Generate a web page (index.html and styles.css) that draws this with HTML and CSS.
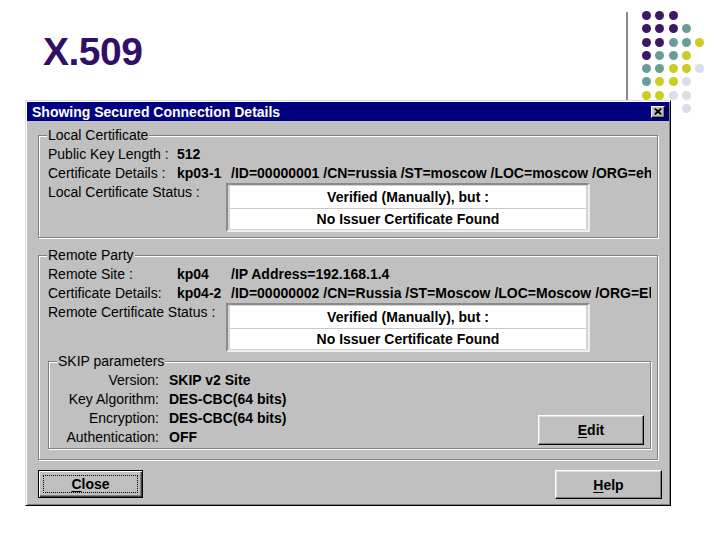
FILE: index.html
```html
<!DOCTYPE html>
<html>
<head>
<meta charset="utf-8">
<link rel="stylesheet" href="styles.css">
</head>
<body>
<div class="slide">
  <div class="deco" aria-hidden="true">
    <div class="vline"></div>
    <div class="dots">
      <span class="dot p"></span><span class="dot p"></span><span class="dot p"></span><span class="dot"></span><span class="dot"></span>
      <span class="dot p"></span><span class="dot p"></span><span class="dot p"></span><span class="dot t"></span><span class="dot"></span>
      <span class="dot p"></span><span class="dot p"></span><span class="dot t"></span><span class="dot t"></span><span class="dot y"></span>
      <span class="dot p"></span><span class="dot t"></span><span class="dot t"></span><span class="dot y"></span><span class="dot"></span>
      <span class="dot t"></span><span class="dot t"></span><span class="dot y"></span><span class="dot y"></span><span class="dot l"></span>
      <span class="dot t"></span><span class="dot y"></span><span class="dot y"></span><span class="dot l"></span><span class="dot"></span>
      <span class="dot y"></span><span class="dot y"></span><span class="dot l"></span><span class="dot l"></span><span class="dot"></span>
      <span class="dot"></span><span class="dot"></span><span class="dot"></span><span class="dot l"></span><span class="dot"></span>
    </div>
  </div>

  <h1 class="title">X.509</h1>

  <div class="dialog">
    <div class="titlebar">
      <span>Showing Secured Connection Details</span>
      <span class="xbtn"><svg width="8" height="7" viewBox="0 0 8 7"><path d="M0.8 0.6 L7.2 6.4 M7.2 0.6 L0.8 6.4" stroke="#000" stroke-width="1.9" fill="none"/></svg></span>
    </div>

    <div class="dialog-body">
      <fieldset class="group local">
        <legend>Local Certificate</legend>
        <div class="row"><span class="lbl">Public Key Length :</span><b class="val">512</b></div>
        <div class="row"><span class="lbl">Certificate Details :</span><b class="tok">kp03-1</b><b class="val">/ID=00000001 /CN=russia /ST=moscow /LOC=moscow /ORG=eh</b></div>
        <div class="row status-row">
          <span class="lbl wide">Local Certificate Status :</span>
          <div class="status">
            <div class="status-line">Verified (Manually), but :</div>
            <div class="status-line second">No Issuer Certificate Found</div>
          </div>
        </div>
      </fieldset>

      <fieldset class="group remote">
        <legend>Remote Party</legend>
        <div class="row"><span class="lbl">Remote Site :</span><b class="tok">kp04</b><b class="val">/IP Address=192.168.1.4</b></div>
        <div class="row"><span class="lbl">Certificate Details:</span><b class="tok">kp04-2</b><b class="val">/ID=00000002 /CN=Russia /ST=Moscow /LOC=Moscow /ORG=Eh</b></div>
        <div class="row status-row">
          <span class="lbl wide">Remote Certificate Status :</span>
          <div class="status">
            <div class="status-line">Verified (Manually), but :</div>
            <div class="status-line second">No Issuer Certificate Found</div>
          </div>
        </div>

        <fieldset class="group skip">
          <legend>SKIP parameters</legend>
          <div class="skip-content">
            <dl class="params">
              <dt>Version:</dt><dd>SKIP v2 Site</dd>
              <dt>Key Algorithm:</dt><dd>DES-CBC(64 bits)</dd>
              <dt>Encryption:</dt><dd>DES-CBC(64 bits)</dd>
              <dt>Authentication:</dt><dd>OFF</dd>
            </dl>
            <button class="btn edit"><span><u>E</u>dit</span></button>
          </div>
        </fieldset>
      </fieldset>
    </div>

    <div class="dialog-footer">
      <button class="btn btn-default close"><span class="focus"><u>C</u>lose</span></button>
      <button class="btn help"><span><u>H</u>elp</span></button>
    </div>
  </div>
</div>
</body>
</html>
```

FILE: styles.css
```css
* { box-sizing: border-box; }

body {
  margin: 0;
  background: #fff;
  font-family: "Liberation Sans", Arial, sans-serif;
  color: #000;
}

.slide {
  position: relative;
  width: 720px;
  height: 540px;
  overflow: hidden;
  padding-top: 32px;
}

/* decoration top right */
.vline {
  position: absolute;
  left: 626px;
  top: 12px;
  width: 2px;
  height: 95px;
  background: #8a8a8a;
}
.dots {
  position: absolute;
  left: 642px;
  top: 11px;
  display: grid;
  grid-template-columns: repeat(5, 9px);
  grid-auto-rows: 9px;
  gap: 4.3px;
}
.dot { width: 9px; height: 9px; border-radius: 50%; }
.dot.p { background: #3a1863; }
.dot.t { background: #6c9c9a; }
.dot.y { background: #cccc22; }
.dot.l { background: #dcdcea; }

.title {
  margin: 0 0 0 43px;
  font-size: 39px;
  line-height: 39px;
  font-weight: bold;
  color: #330e66;
  letter-spacing: -0.5px;
}

/* dialog */
.dialog {
  position: relative;
  z-index: 1;
  margin: 29px 0 0 25px;
  width: 646px;
  background: #c0c0c0;
  border: 1px solid;
  border-color: #dfdfdf #000 #000 #dfdfdf;
  box-shadow: inset 1px 1px 0 #fff, inset -1px -1px 0 #808080;
  padding: 1px;
  font-size: 14px;
}

.titlebar {
  height: 19px;
  background: #000080;
  color: #fff;
  font-weight: bold;
  font-size: 14px;
  display: flex;
  align-items: center;
  justify-content: space-between;
  padding: 0 4px 0 5px;
}
.xbtn {
  width: 14px;
  height: 12px;
  background: #c0c0c0;
  border: 1px solid;
  border-color: #fff #000 #000 #fff;
  box-shadow: inset -1px -1px 0 #808080;
  display: flex;
  align-items: center;
  justify-content: center;
}
.xbtn svg { display: block; }

.dialog-body {
  padding: 7px 11px 0 11px;
}

.group {
  margin: 0;
  min-width: 0;
  border: 1px solid #808080;
  box-shadow: inset 1px 1px 0 #fff, 1px 1px 0 #fff;
  padding: 2px 6px 6px 9px;
}
.group legend {
  padding: 0 1px;
  margin-left: -1px;
  font-size: 14px;
  line-height: 15px;
  background: #c0c0c0;
}
.local {
  padding-bottom: 5px;
}
.remote {
  margin-top: 10px;
  padding-bottom: 10px;
  padding-right: 6px;
}

.row {
  display: flex;
  height: 19px;
  line-height: 19px;
  white-space: nowrap;
  overflow: hidden;
}
.lbl { flex: none; width: 129px; }
.lbl.wide { width: 178px; }
.tok { flex: none; width: 54px; font-weight: bold; }
.val { font-weight: bold; }
.status-row { height: auto; }

.status {
  flex: none;
  width: 364px;
  height: 49px;
  border: 2px solid;
  border-color: #8a8a8a #eeeeee #eeeeee #8a8a8a;
  padding: 1px 2px;
  background: #d4d4d4;
}
.status-line {
  height: 22px;
  line-height: 22px;
  background: #fff;
  text-align: center;
  font-weight: bold;
}
.status-line.second {
  height: 21px;
  line-height: 20px;
  border-top: 1px solid #c8c8c8;
}

.skip {
  margin-top: 2px;
  padding: 2px 6px 1px 9px;
}
.skip-content {
  display: flex;
}
.params {
  margin: 0;
  display: grid;
  grid-template-columns: 101px auto;
  column-gap: 10px;
  line-height: 19px;
}
.params dt { text-align: right; }
.params dd { margin: 0; font-weight: bold; }

/* buttons */
.btn {
  font-family: "Liberation Sans", Arial, sans-serif;
  font-size: 14px;
  font-weight: bold;
  color: #000;
  background: #c0c0c0;
  border: 1px solid;
  border-color: #fff #000 #000 #fff;
  box-shadow: inset -1px -1px 0 #808080, inset 1px 1px 0 #dfdfdf;
  padding: 0;
  display: flex;
  align-items: center;
  justify-content: center;
  cursor: default;
}
.btn u { text-underline-offset: 2px; }
.edit {
  margin-left: auto;
  align-self: flex-end;
  margin-bottom: 2px;
  width: 106px;
  height: 30px;
}

.dialog-footer {
  display: flex;
  justify-content: space-between;
  align-items: flex-start;
  padding: 10px 7px 5px 11px;
}
.close {
  width: 105px;
  height: 28px;
}
.btn-default {
  border: 1px solid #000;
  box-shadow: inset 1px 1px 0 #fff, inset -1px -1px 0 #404040, inset -2px -2px 0 #808080;
  padding: 4px;
  align-items: stretch;
}
.btn-default .focus {
  flex: 1;
  border: 1px dotted #000;
  display: flex;
  align-items: center;
  justify-content: center;
}
.help {
  width: 107px;
  height: 29px;
}
```
